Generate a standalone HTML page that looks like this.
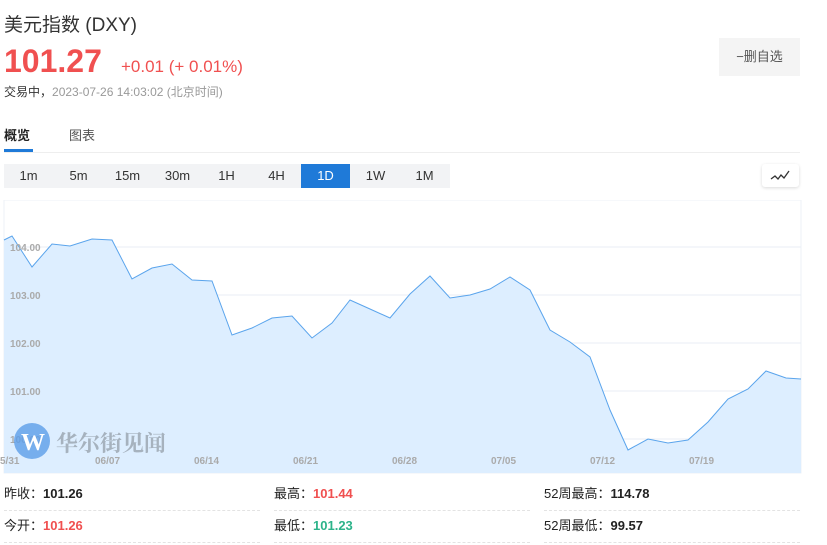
<!DOCTYPE html>
<html><head><meta charset="utf-8"><style>
body{margin:0;width:827px;height:545px;overflow:hidden;background:#fff;font-family:"Liberation Sans","Noto Sans CJK SC",sans-serif;position:relative}
.a{position:absolute;white-space:nowrap}
.tf{position:absolute;top:164px;height:24px;line-height:24px;text-align:center;width:49px;font-size:13px;color:#333;background:#f2f3f5}
.st{position:absolute;font-size:13px;color:#222;height:32px;line-height:32px;border-bottom:1px dashed #e3e3e3;width:256px}
.st b{font-weight:bold}
</style></head><body>
<div class="a" style="left:4px;top:10px;font-size:19px;color:#333">美元指数 (DXY)</div>
<div class="a" style="left:4px;top:43px;font-size:32px;font-weight:bold;color:#f05050">101.27</div>
<div class="a" style="left:121px;top:57px;font-size:17px;color:#f05050">+0.01 (+ 0.01%)</div>
<div class="a" style="left:4px;top:83px;font-size:12px;color:#333">交易中，<span style="color:#999">2023-07-26 14:03:02 (北京时间)</span></div>
<div class="a" style="left:719px;top:38px;width:81px;height:38px;line-height:38px;text-align:center;background:#f4f4f4;font-size:13px;color:#555">−删自选</div>
<div class="a" style="left:4px;top:125px;font-size:13px;font-weight:bold;color:#222">概览</div>
<div class="a" style="left:4px;top:149px;width:29px;height:3px;background:#1f7ad8"></div>
<div class="a" style="left:69px;top:125px;font-size:13px;color:#555">图表</div>
<div class="a" style="left:4px;top:152px;width:796px;height:1px;background:#eee"></div>
<div class="a" style="left:4px;top:164px;width:446px;height:24px;background:#f2f3f5"></div>
<div class="tf" style="left:4px">1m</div><div class="tf" style="left:54px">5m</div><div class="tf" style="left:103px">15m</div><div class="tf" style="left:153px">30m</div><div class="tf" style="left:202px">1H</div><div class="tf" style="left:252px">4H</div><div class="tf" style="left:301px;background:#1f7ad8;color:#fff">1D</div><div class="tf" style="left:351px">1W</div><div class="tf" style="left:400px">1M</div>
<div class="a" style="left:762px;top:164px;width:37px;height:23px;background:#fff;border-radius:3px;box-shadow:0 1px 3px rgba(0,0,0,.15)"><svg width="37" height="23"><path d="M9 15l4-3 3 3 3-4 3 3 5-7" fill="none" stroke="#333" stroke-width="1.3"/></svg></div>
<svg class="a" style="left:0;top:200px" width="827" height="274">
<rect x="4" y="0" width="797" height="273" fill="#fff" stroke="#eef2f7"/>
<g stroke="#e8eef5"><line x1="4" x2="801" y1="47" y2="47"/><line x1="4" x2="801" y1="95" y2="95"/><line x1="4" x2="801" y1="143" y2="143"/><line x1="4" x2="801" y1="191" y2="191"/><line x1="4" x2="801" y1="239" y2="239"/></g>
<polygon fill="#ddeeff" points="4,273 4,40 12,36 32,67 52,44 70,46 92,39 112,40 132,79 152,68 172,64 192,80 212,81 232,135 252,128 272,118 292,116 312,138 332,123 350,100 370,109 390,118 410,94 430,76 450,98 470,95 490,89 510,77 530,90 550,130 570,142 590,157 610,210 628,250 648,239 668,243 688,240 708,222 728,199 748,189 766,171 786,178 801,179 801,273"/>
<polyline fill="none" stroke="#5aa4ec" stroke-width="1" points="4,40 12,36 32,67 52,44 70,46 92,39 112,40 132,79 152,68 172,64 192,80 212,81 232,135 252,128 272,118 292,116 312,138 332,123 350,100 370,109 390,118 410,94 430,76 450,98 470,95 490,89 510,77 530,90 550,130 570,142 590,157 610,210 628,250 648,239 668,243 688,240 708,222 728,199 748,189 766,171 786,178 801,179"/>
<g font-size="10" fill="#aaa" font-weight="bold"><text x="10" y="51">104.00</text><text x="10" y="99">103.00</text><text x="10" y="147">102.00</text><text x="10" y="195">101.00</text><text x="10" y="243">100.00</text>
<text x="0" y="264">5/31</text><text x="95" y="264">06/07</text><text x="194" y="264">06/14</text><text x="293" y="264">06/21</text><text x="392" y="264">06/28</text><text x="491" y="264">07/05</text><text x="590" y="264">07/12</text><text x="689" y="264">07/19</text></g>
<circle cx="32" cy="241" r="18" fill="#5c9de8" opacity=".8"/><text x="21" y="250" font-size="24" fill="#fff" font-family="Liberation Serif" font-weight="bold">W</text>
<text x="56" y="251" font-size="22" fill="#a6b2be" font-weight="bold" font-family="Noto Serif CJK SC,serif">华尔街见闻</text>
</svg>
<div class="st" style="left:4px;top:478px">昨收：<b>101.26</b></div>
<div class="st" style="left:274px;top:478px">最高：<b style="color:#f05050">101.44</b></div>
<div class="st" style="left:544px;top:478px">52周最高：<b>114.78</b></div>
<div class="st" style="left:4px;top:510px">今开：<b style="color:#f05050">101.26</b></div>
<div class="st" style="left:274px;top:510px">最低：<b style="color:#2db38a">101.23</b></div>
<div class="st" style="left:544px;top:510px">52周最低：<b>99.57</b></div>
</body></html>
